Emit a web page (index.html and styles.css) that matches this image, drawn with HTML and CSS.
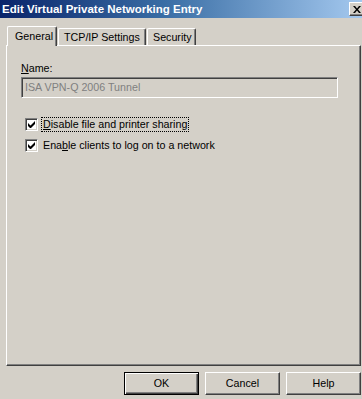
FILE: index.html
```html
<!DOCTYPE html>
<html lang="en">
<head>
    <meta charset="UTF-8">
    <title>Edit Virtual Private Networking Entry</title>
    <link rel="stylesheet" href="styles.css">
</head>
<body>

    <div class="dialog">
        <div class="titlebar">
            <span class="title">Edit Virtual Private Networking Entry</span>
            <span class="close-btn">
                <svg width="8" height="7" viewBox="0 0 8 7">
                    <path d="M0 0h2l2 2.5L6 0h2L5 3.5 8 7H6L4 4.5 2 7H0l3-3.5z" fill="#000"/>
                </svg>
            </span>
        </div>

        <div class="tabs">
            <div class="tab active">General</div>
            <div class="tab tab-tcp">TCP/IP Settings</div>
            <div class="tab tab-sec">Security</div>
        </div>

        <div class="panel">
            <label class="field-label"><u>N</u>ame:</label>
            <div class="textbox">ISA VPN-Q 2006 Tunnel</div>

            <div class="check-list">
                <div class="check-row">
                    <span class="checkbox"><svg width="7" height="7" viewBox="0 0 7 7"><path d="M0 2v3l2 2h1l4-4V0L2.5 4.5z" fill="#000"/></svg></span>
                    <span class="check-text focused"><u>D</u>isable file and printer sharing</span>
                </div>
                <div class="check-row">
                    <span class="checkbox"><svg width="7" height="7" viewBox="0 0 7 7"><path d="M0 2v3l2 2h1l4-4V0L2.5 4.5z" fill="#000"/></svg></span>
                    <span class="check-text">Ena<u>b</u>le clients to log on to a network</span>
                </div>
            </div>
        </div>

        <div class="buttons">
            <div class="btn default">OK</div>
            <div class="btn">Cancel</div>
            <div class="btn">Help</div>
        </div>
    </div>

</body>
</html>
```

FILE: styles.css
```css
html, body {
    margin: 0;
    padding: 0;
    overflow: hidden;
}
* {
    box-sizing: border-box;
}
body {
    width: 362px;
    height: 399px;
    background-color: #d4d0c8;
    font-family: "Liberation Sans", Arial, sans-serif;
    font-size: 10.7px;
    color: #000;
}
.dialog {
    width: 366px;
    height: 399px;
}
.titlebar {
    height: 18px;
    display: flex;
    align-items: center;
    padding: 0 1px 0 2px;
    background: linear-gradient(to right, #0a246a 0%, #3a6ea5 45%, #a6caf0 100%);
}
.title {
    color: #fff;
    font-weight: bold;
    font-size: 11.5px;
    flex: 1;
    white-space: nowrap;
}
.close-btn {
    width: 16px;
    height: 14px;
    display: flex;
    align-items: center;
    justify-content: center;
    background: #d4d0c8;
    border: 1px solid;
    border-color: #fff #404040 #404040 #fff;
    box-shadow: inset -1px -1px #808080;
}
.tabs {
    display: flex;
    align-items: flex-end;
    height: 19px;
    margin-top: 8px;
    padding-left: 7px;
}
.tab {
    height: 17px;
    line-height: 16px;
    padding: 0 4px 0 5px;
    border: 1px solid;
    border-bottom: none;
    border-color: #fff #404040 #fff #fff;
    border-radius: 2px 2px 0 0;
    box-shadow: inset -1px 0 #808080;
    white-space: nowrap;
}
.tab.active {
    position: relative;
    z-index: 1;
    width: 50px;
    height: 20px;
    line-height: 18px;
    margin-bottom: -1px;
    padding: 0 0 0 7px;
    background: #d4d0c8;
}
.tab-tcp {
    margin-left: 1px;
    width: 88px;
}
.tab-sec {
    margin-left: 1px;
    width: 49px;
}
.panel {
    height: 321px;
    margin: 0 5px 0 6px;
    padding: 14px 22px 0 14px;
    border: 1px solid;
    border-color: #fff #404040 #404040 #fff;
    box-shadow: inset -1px -1px #808080;
}
.field-label {
    display: block;
    line-height: 16px;
}
.textbox {
    height: 21px;
    line-height: 19px;
    margin-top: 1px;
    padding-left: 3px;
    color: #808080;
    border: 1px solid;
    border-color: #808080 #fff #fff #808080;
    box-shadow: inset 1px 1px #404040, inset -1px -1px #d4d0c8;
}
.check-list {
    display: flex;
    flex-direction: column;
    gap: 7px;
    margin-top: 19px;
    padding-left: 4px;
}
.check-row {
    display: flex;
    align-items: center;
    gap: 3px;
    height: 14px;
}
.checkbox {
    width: 13px;
    height: 13px;
    display: flex;
    align-items: center;
    justify-content: center;
    background: #fff;
    border: 1px solid;
    border-color: #808080 #fff #fff #808080;
    box-shadow: inset 1px 1px #404040, inset -1px -1px #d4d0c8;
}
.check-text {
    padding: 0 1px;
    line-height: 13px;
    border: 1px solid transparent;
}
.check-text.focused {
    border: 1px dotted #000;
}
.buttons {
    display: flex;
    gap: 6px;
    margin-top: 6px;
    padding-left: 124px;
}
.btn {
    width: 75px;
    height: 23px;
    line-height: 21px;
    text-align: center;
    border: 1px solid;
    border-color: #fff #404040 #404040 #fff;
    box-shadow: inset -1px -1px #808080;
}
.btn.default {
    border: 1px solid #000;
    box-shadow: inset 1px 1px #fff, inset -1px -1px #404040, inset -2px -2px #808080;
}
```
